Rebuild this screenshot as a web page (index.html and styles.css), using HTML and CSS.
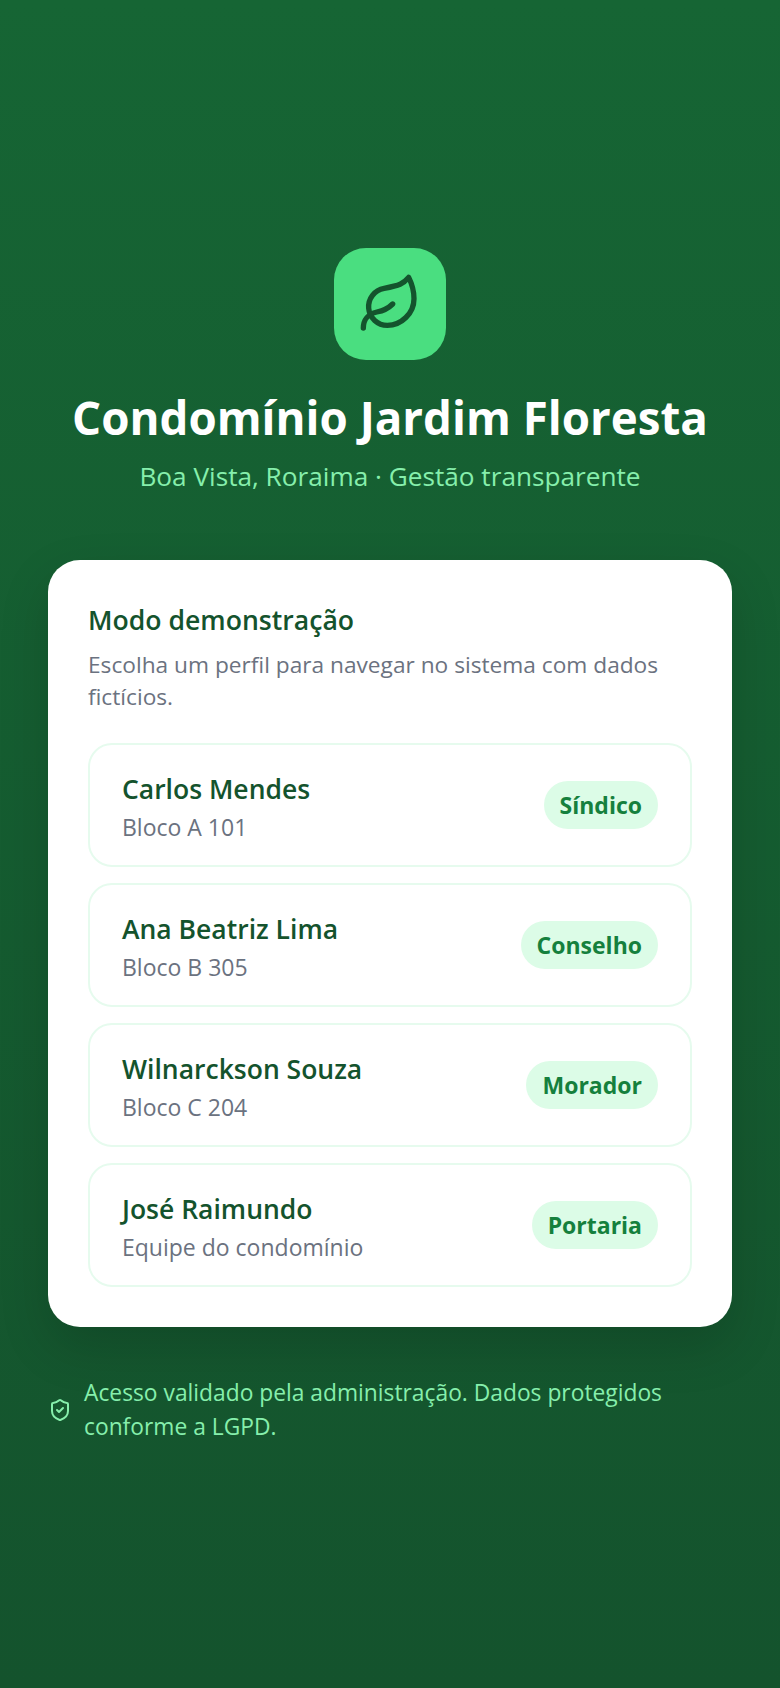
FILE: index.html
```html
<!DOCTYPE html>
<html lang="pt-BR">
<head>
    <meta charset="UTF-8">
    <meta name="viewport" content="width=device-width, initial-scale=1.0">
    <title>Condomínio Jardim Floresta</title>
    <link rel="stylesheet" href="styles.css">
</head>
<body>
    <main class="page">
        <header class="brand">
            <div class="logo">
                <svg class="logo-icon" viewBox="0 0 24 24" fill="none" stroke="currentColor" stroke-width="2" stroke-linecap="round" stroke-linejoin="round">
                    <path d="M11 20A7 7 0 0 1 9.8 6.1C15.5 5 17 4.48 19 2c1 2 2 4.18 2 8 0 5.5-4.78 10-10 10Z"/>
                    <path d="M2 21c0-3 1.85-5.36 5.08-6C9.5 14.52 12 13 13 12"/>
                </svg>
            </div>
            <h1 class="brand-title">Condomínio Jardim Floresta</h1>
            <p class="brand-sub">Boa Vista, Roraima · Gestão transparente</p>
        </header>

        <section class="card">
            <h2 class="card-title">Modo demonstração</h2>
            <p class="card-text">Escolha um perfil para navegar no sistema com dados fictícios.</p>

            <div class="profiles">
                <button class="profile">
                    <span class="profile-info">
                        <span class="profile-name">Carlos Mendes</span>
                        <span class="profile-unit">Bloco A 101</span>
                    </span>
                    <span class="badge">Síndico</span>
                </button>
                <button class="profile">
                    <span class="profile-info">
                        <span class="profile-name">Ana Beatriz Lima</span>
                        <span class="profile-unit">Bloco B 305</span>
                    </span>
                    <span class="badge">Conselho</span>
                </button>
                <button class="profile">
                    <span class="profile-info">
                        <span class="profile-name">Wilnarckson Souza</span>
                        <span class="profile-unit">Bloco C 204</span>
                    </span>
                    <span class="badge">Morador</span>
                </button>
                <button class="profile">
                    <span class="profile-info">
                        <span class="profile-name">José Raimundo</span>
                        <span class="profile-unit">Equipe do condomínio</span>
                    </span>
                    <span class="badge">Portaria</span>
                </button>
            </div>
        </section>

        <footer class="notice">
            <svg class="notice-icon" viewBox="0 0 24 24" fill="none" stroke="currentColor" stroke-width="2" stroke-linecap="round" stroke-linejoin="round">
                <path d="M20 13c0 5-3.5 7.5-7.66 8.95a1 1 0 0 1-.67-.01C7.5 20.5 4 18 4 13V6a1 1 0 0 1 1-1c2 0 4.5-1.2 6.24-2.72a1.17 1.17 0 0 1 1.52 0C14.51 3.81 17 5 19 5a1 1 0 0 1 1 1z"/>
                <path d="m9 12 2 2 4-4"/>
            </svg>
            <p class="notice-text">Acesso validado pela administração. Dados protegidos conforme a LGPD.</p>
        </footer>
    </main>
</body>
</html>
```

FILE: styles.css
```css
* {
    box-sizing: border-box;
}

body {
    margin: 0;
    font-family: "Open Sans", "Noto Sans", sans-serif;
    background: linear-gradient(180deg, #166534 0%, #14532d 100%);
}

.page {
    min-height: 1688px;
    padding: 3px 48px 0;
    display: flex;
    flex-direction: column;
    justify-content: center;
}

.brand {
    display: flex;
    flex-direction: column;
    align-items: center;
    text-align: center;
    margin-bottom: 66px;
}

.logo {
    width: 112px;
    height: 112px;
    border-radius: 32px;
    background: #4ade80;
    color: #14532d;
    display: flex;
    align-items: center;
    justify-content: center;
    margin-bottom: 27px;
}

.logo-icon {
    width: 64px;
    height: 64px;
}

.brand-title {
    margin: 0 0 11px;
    font-size: 45.7px;
    line-height: 60px;
    font-weight: 700;
    color: #fff;
    white-space: nowrap;
}

.brand-sub {
    margin: 0;
    font-size: 26.2px;
    line-height: 36px;
    color: #86efac;
}

.card {
    background: #fff;
    border-radius: 32px;
    padding: 40px;
    box-shadow: 0 20px 50px rgba(0, 0, 0, 0.15);
}

.card-title {
    margin: 0 0 9px;
    font-size: 26.6px;
    line-height: 40px;
    font-weight: 600;
    color: #14532d;
}

.card-text {
    margin: 0 0 30px;
    font-size: 22.7px;
    line-height: 32px;
    color: #6b7280;
}

.profiles {
    display: flex;
    flex-direction: column;
    gap: 16px;
}

.profile {
    width: 100%;
    height: 124px;
    padding: 0 32px;
    background: #fff;
    border: 2px solid #e6fbee;
    border-radius: 24px;
    display: flex;
    align-items: center;
    justify-content: space-between;
    font-family: inherit;
    text-align: left;
    cursor: pointer;
}

.profile-info {
    display: flex;
    flex-direction: column;
    gap: 3px;
    padding-top: 3px;
}

.profile-name {
    font-size: 26.5px;
    line-height: 38px;
    font-weight: 600;
    color: #14532d;
}

.profile-unit {
    font-size: 23px;
    line-height: 32px;
    color: #6b7280;
}

.badge {
    padding: 8px 16px;
    border-radius: 999px;
    background: #dcfce7;
    color: #15803d;
    font-size: 23px;
    line-height: 32px;
    font-weight: 700;
}

.notice {
    display: flex;
    align-items: center;
    gap: 12px;
    margin-top: 49px;
}

.notice-icon {
    width: 24px;
    height: 24px;
    flex-shrink: 0;
    color: #86efac;
}

.notice-text {
    margin: 0;
    font-size: 22.8px;
    line-height: 34px;
    color: #86efac;
}
```
